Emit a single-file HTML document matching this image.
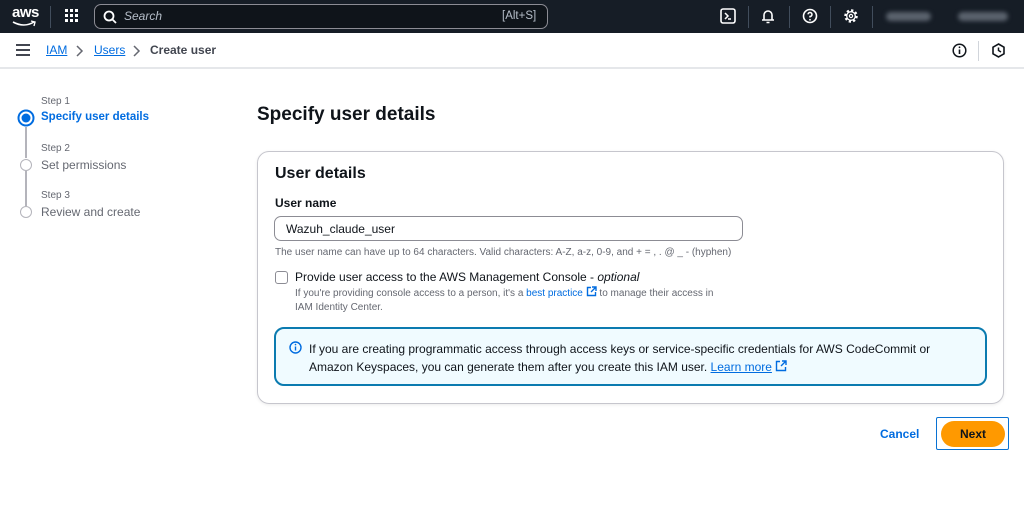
<!DOCTYPE html>
<html><head><meta charset="utf-8"><style>
*{box-sizing:border-box;margin:0;padding:0}
body{width:1024px;height:526px;background:#fff;font-family:"Liberation Sans",sans-serif;color:#0f141a;position:relative;overflow:hidden}
.a{position:absolute}
.top{left:0;top:0;width:1024px;height:33px;background:#161d26}
.sub{left:0;top:33px;width:1024px;height:36px;background:#fff;border-bottom:2px solid #e5e7ea}
.lnk{color:#006ce0;text-decoration:underline}
.gray{color:#656871}
</style></head><body>
<div class="a top">
 <div class="a" style="left:12px;top:4px;color:#fff;font-size:15px;font-weight:bold;letter-spacing:-0.5px">aws</div>
 <svg class="a" style="left:12px;top:20px" width="26" height="8"><path d="M1 2 Q12 8 22 2" stroke="#fff" fill="none" stroke-width="1.6"/><path d="M19 1 L23 2 L22 6" stroke="#fff" fill="none" stroke-width="1.4"/></svg>
 <div class="a" style="left:50px;top:6px;width:1px;height:22px;background:#414d5c"></div>
 <svg class="a" style="left:65px;top:9px" width="14" height="14" fill="#fff"><rect x="0" y="0" width="3" height="3"/><rect x="5" y="0" width="3" height="3"/><rect x="10" y="0" width="3" height="3"/><rect x="0" y="5" width="3" height="3"/><rect x="5" y="5" width="3" height="3"/><rect x="10" y="5" width="3" height="3"/><rect x="0" y="10" width="3" height="3"/><rect x="5" y="10" width="3" height="3"/><rect x="10" y="10" width="3" height="3"/></svg>
 <div class="a" style="left:94px;top:4px;width:454px;height:25px;border:1px solid #8c8c94;border-radius:7px;background:#0f141a"></div>
 <svg class="a" style="left:103px;top:10px" width="14" height="14"><circle cx="6" cy="6" r="4.5" stroke="#fff" stroke-width="1.8" fill="none"/><path d="M9.5 9.5 L13 13" stroke="#fff" stroke-width="1.8"/></svg>
 <div class="a" style="left:124px;top:9px;color:#b6bec9;font-size:12px;font-style:italic">Search</div>
 <div class="a" style="left:502px;top:10px;color:#b6bec9;font-size:11.5px">[Alt+S]</div>
 <svg class="a" style="left:720px;top:8px" width="16" height="16"><rect x="1" y="1" width="14" height="14" rx="2" stroke="#fff" stroke-width="1.6" fill="none"/><path d="M5 5 L8 8 L5 11 M8 11 H11" stroke="#fff" stroke-width="1.5" fill="none"/></svg>
 <div class="a" style="left:748px;top:6px;width:1px;height:22px;background:#414d5c"></div>
 <svg class="a" style="left:760px;top:8px" width="16" height="16"><path d="M4 12 V7 A4 4 0 0 1 12 7 V12 H4 M2 12 H14 M6.5 14.5 H9.5" stroke="#fff" stroke-width="1.6" fill="none"/></svg>
 <div class="a" style="left:789px;top:6px;width:1px;height:22px;background:#414d5c"></div>
 <svg class="a" style="left:802px;top:8px" width="16" height="16"><circle cx="8" cy="8" r="6.5" stroke="#fff" stroke-width="1.6" fill="none"/><path d="M6 6.3 A2 2 0 1 1 8 8.5 V9.5" stroke="#fff" stroke-width="1.5" fill="none"/><circle cx="8" cy="11.8" r="0.9" fill="#fff"/></svg>
 <div class="a" style="left:830px;top:6px;width:1px;height:22px;background:#414d5c"></div>
 <svg class="a" style="left:843px;top:8px" width="16" height="16"><circle cx="8" cy="8" r="5.5" stroke="#fff" stroke-width="2.5" stroke-dasharray="2.2 2.1" fill="none"/><circle cx="8" cy="8" r="4.3" stroke="#fff" stroke-width="1.3" fill="none"/><circle cx="8" cy="8" r="1.6" stroke="#fff" stroke-width="1.2" fill="none"/></svg>
 <div class="a" style="left:872px;top:6px;width:1px;height:22px;background:#414d5c"></div>
 <div class="a" style="left:886px;top:12px;width:45px;height:9px;background:#5a626d;border-radius:5px;filter:blur(2px)"></div>
 <div class="a" style="left:958px;top:12px;width:50px;height:9px;background:#5a626d;border-radius:5px;filter:blur(2px)"></div>
</div>
<div class="a sub">
 <svg class="a" style="left:16px;top:11px" width="14" height="12"><path d="M0 1 H14 M0 6 H14 M0 11 H14" stroke="#424650" stroke-width="2"/></svg>
 <div class="a lnk" style="left:46px;top:10px;font-size:12px">IAM</div>
 <svg class="a" style="left:76px;top:12px" width="8" height="12"><path d="M1 1 L6 6 L1 11" stroke="#656871" stroke-width="1.5" fill="none"/></svg>
 <div class="a lnk" style="left:94px;top:10px;font-size:12px">Users</div>
 <svg class="a" style="left:133px;top:12px" width="8" height="12"><path d="M1 1 L6 6 L1 11" stroke="#656871" stroke-width="1.5" fill="none"/></svg>
 <div class="a" style="left:150px;top:10px;font-size:12px;font-weight:bold;color:#424650">Create user</div>
 <svg class="a" style="left:952px;top:10px" width="15" height="15"><circle cx="7.5" cy="7.5" r="6.3" stroke="#0f141a" stroke-width="1.5" fill="none"/><path d="M7.5 6.5 V11" stroke="#0f141a" stroke-width="1.6"/><circle cx="7.5" cy="4.3" r="0.9" fill="#0f141a"/></svg>
 <div class="a" style="left:978px;top:8px;width:1px;height:20px;background:#d1d5db"></div>
 <svg class="a" style="left:991px;top:10px" width="15" height="15"><path d="M7.5 1 L13 4.2 V10.8 L7.5 14 L2 10.8 V4.2 Z" stroke="#0f141a" stroke-width="1.6" fill="none"/><path d="M7.5 4.5 V7.5 L10 9" stroke="#0f141a" stroke-width="1.5" fill="none"/></svg>
</div>

<div class="a gray" style="left:41px;top:96px;font-size:10px">Step 1</div>
<svg class="a" style="left:17px;top:109px" width="18" height="18"><circle cx="9" cy="9" r="7.5" stroke="#006ce0" stroke-width="2" fill="none"/><circle cx="9" cy="9" r="4.5" fill="#006ce0"/></svg>
<div class="a" style="left:41px;top:111px;font-size:11.5px;font-weight:bold;color:#006ce0">Specify user details</div>
<div class="a" style="left:25px;top:127px;width:2px;height:31px;background:#b4b4bb"></div>
<div class="a gray" style="left:41px;top:143px;font-size:10px">Step 2</div>
<div class="a" style="left:20px;top:159px;width:12px;height:12px;border:1.5px solid #b4b4bb;border-radius:50%"></div>
<div class="a gray" style="left:41px;top:158px;font-size:12px">Set permissions</div>
<div class="a" style="left:25px;top:171px;width:2px;height:35px;background:#b4b4bb"></div>
<div class="a gray" style="left:41px;top:190px;font-size:10px">Step 3</div>
<div class="a" style="left:20px;top:206px;width:12px;height:12px;border:1.5px solid #b4b4bb;border-radius:50%"></div>
<div class="a gray" style="left:41px;top:205px;font-size:12px">Review and create</div>

<div class="a" style="left:257px;top:104px;font-size:19px;font-weight:bold">Specify user details</div>
<div class="a" style="left:257px;top:151px;width:747px;height:253px;border:1px solid #c6c6cd;border-radius:12px;box-shadow:0 1px 3px rgba(0,0,0,.08)"></div>
<div class="a" style="left:275px;top:165px;font-size:16px;font-weight:bold">User details</div>
<div class="a" style="left:275px;top:196px;font-size:12px;font-weight:bold">User name</div>
<div class="a" style="left:274px;top:216px;width:469px;height:25px;border:1px solid #8c8c94;border-radius:7px"></div>
<div class="a" style="left:286px;top:222px;font-size:12px">Wazuh_claude_user</div>
<div class="a gray" style="left:275px;top:247px;font-size:10px;white-space:nowrap">The user name can have up to 64 characters. Valid characters: A-Z, a-z, 0-9, and + = , . @ _ - (hyphen)</div>
<div class="a" style="left:275px;top:271px;width:13px;height:13px;border:1.5px solid #8c8c94;border-radius:3px"></div>
<div class="a" style="left:295px;top:270px;font-size:12px">Provide user access to the AWS Management Console - <i>optional</i></div>
<div class="a gray" style="left:295px;top:286px;font-size:10px;line-height:14px;width:445px">If you're providing console access to a person, it's a <span style="color:#006ce0">best practice</span> <svg width="11" height="11" style="vertical-align:-1px"><path d="M5 1.5 H1.5 V9.5 H9.5 V6" stroke="#006ce0" stroke-width="1.4" fill="none"/><path d="M6 1 H10 V5 M10 1 L5 6" stroke="#006ce0" stroke-width="1.4" fill="none"/></svg> to manage their access in<br>IAM Identity Center.</div>
<div class="a" style="left:274px;top:327px;width:713px;height:59px;border:2px solid #0b7bb0;border-radius:10px;background:#f0fbff"></div>
<svg class="a" style="left:289px;top:341px" width="13" height="13"><circle cx="6.5" cy="6.5" r="5.5" stroke="#006ce0" stroke-width="1.4" fill="none"/><path d="M6.5 5.5 V9.5" stroke="#006ce0" stroke-width="1.4"/><circle cx="6.5" cy="3.6" r="0.8" fill="#006ce0"/></svg>
<div class="a" style="left:309px;top:340px;font-size:12px;line-height:18px;width:670px">If you are creating programmatic access through access keys or service-specific credentials for AWS CodeCommit or<br>Amazon Keyspaces, you can generate them after you create this IAM user. <span class="lnk">Learn more</span> <svg width="12" height="12" style="vertical-align:-1px"><path d="M5 1.5 H1.5 V10.5 H10.5 V7" stroke="#006ce0" stroke-width="1.4" fill="none"/><path d="M7 1 H11 V5 M11 1 L6 6" stroke="#006ce0" stroke-width="1.4" fill="none"/></svg></div>

<div class="a" style="left:880px;top:427px;font-size:12px;font-weight:bold;color:#006ce0">Cancel</div>
<div class="a" style="left:936px;top:417px;width:73px;height:33px;border:1.5px solid #0972d3;border-radius:2px"></div>
<div class="a" style="left:941px;top:421px;width:64px;height:26px;background:#ff9900;border-radius:13px;font-size:12px;font-weight:bold;text-align:center;line-height:26px">Next</div>
</body></html>
